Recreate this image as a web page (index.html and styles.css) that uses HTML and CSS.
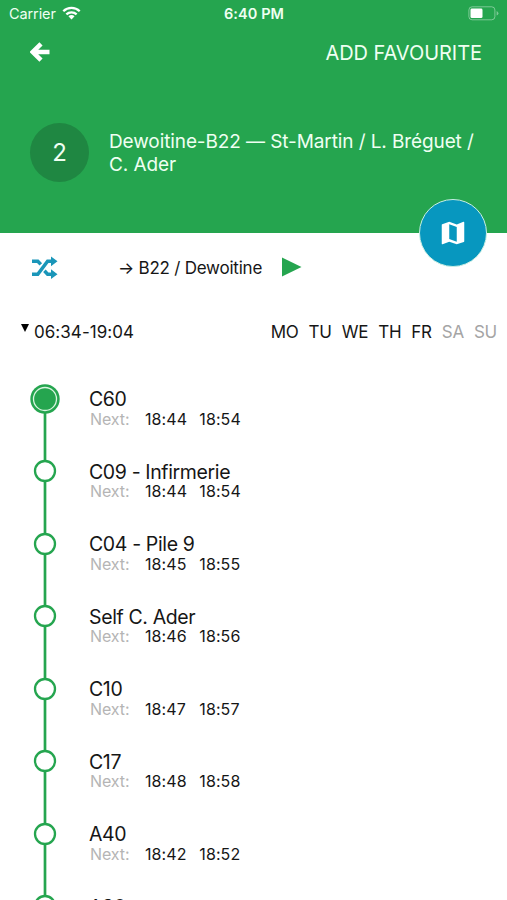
FILE: index.html
```html
<!DOCTYPE html>
<html lang="en">
<head>
<meta charset="utf-8">
<title>Line 2</title>
<link rel="stylesheet" href="styles.css">
</head>
<body>
<header class="header">
  <div class="status">
    <div class="status-left"><span class="carrier">Carrier</span>
      <svg class="wifi" viewBox="0 0 20 15"><g fill="none" stroke="#fff" stroke-width="2.5"><path d="M1.2 5.6a12.6 12.6 0 0 1 17.6 0"/><path d="M4.5 9a8 8 0 0 1 11 0"/></g><path fill="#fff" d="M6.7 11.1a4.8 4.8 0 0 1 6.6 0L10 14.5z"/></svg>
    </div>
    <span class="clock">6:40 PM</span>
    <svg class="battery" viewBox="0 0 31 15"><rect x=".9" y=".8" width="26" height="13" rx="3.2" fill="none" stroke="#fff" stroke-opacity=".4" stroke-width="1"/><rect x="2.5" y="2.5" width="12" height="9.6" rx="1.4" fill="#fff"/><path d="M28.6 5v4.6q1.8-.7 1.8-2.3T28.6 5" fill="#fff" fill-opacity=".4"/></svg>
  </div>
  <nav class="nav">
    <svg class="back" viewBox="0 0 20 20"><path d="M19.5 10H3M11 1.8 2.8 10 11 18.2" fill="none" stroke="#fff" stroke-width="4.5"/></svg>
    <span class="favourite">ADD FAVOURITE</span>
  </nav>
  <div class="line">
    <span class="line-number">2</span>
    <h1 class="line-name">Dewoitine-B22 — St-Martin / L. Bréguet /<br>C. Ader</h1>
  </div>
  <button class="map" aria-label="Map"><svg viewBox="0 0 24 24"><path fill="#fff" d="M20.5 3l-.16.03L15 5.1 9 3 3.36 4.9c-.21.07-.36.25-.36.48V20.5c0 .28.22.5.5.5l.16-.03L9 18.9l6 2.1 5.64-1.9c.21-.07.36-.25.36-.48V3.5c0-.28-.22-.5-.5-.5zM15 19l-6-2.11V5l6 2.11V19z"/></svg></button>
</header>
<section class="direction">
  <svg class="shuffle" viewBox="0 0 26 24"><path d="M0 5.2H5.8L8.8 8.4M12.4 14.8 15.6 18.2H20M0 18.2H5.8L15.6 5.2H20" fill="none" stroke="#1a96b9" stroke-width="3.5"/><path d="M19 .4 25.5 5.2 19 10.2zM19 13.2 25.5 18.2 19 23z" fill="#1a96b9"/></svg>
  <span class="destination">→ B22 / Dewoitine</span>
  <svg class="play" viewBox="0 0 20 20"><path d="M0 .5 19.5 10 0 19.5z" fill="#25a54f"/></svg>
</section>
<section class="schedule">
  <svg class="caret" viewBox="0 0 8 8"><path d="M0 0h8L4 8z"/></svg>
  <span class="hours">06:34-19:04</span>
  <div class="days"><span>MO</span><span>TU</span><span>WE</span><span>TH</span><span>FR</span><span class="off">SA</span><span class="off">SU</span></div>
</section>
<ul class="stops">
  <li class="stop"><svg class="marker" viewBox="0 0 30 72.5"><path class="rail" d="M15 15V73"/><circle cx="15" cy="15" r="14.7" fill="#25a54f"/><circle cx="15" cy="15" r="11.5" fill="none" stroke="#d9f5e0" stroke-width="1.3"/></svg><div><div class="name">C60</div><div class="next"><span class="label">Next:</span><span>18:44</span><span>18:54</span></div></div></li>
  <li class="stop"><svg class="marker" viewBox="0 0 30 72.5"><path class="rail" d="M15 0V73"/><circle class="dot" cx="15" cy="15" r="10"/></svg><div><div class="name">C09 - Infirmerie</div><div class="next"><span class="label">Next:</span><span>18:44</span><span>18:54</span></div></div></li>
  <li class="stop"><svg class="marker" viewBox="0 0 30 72.5"><path class="rail" d="M15 0V73"/><circle class="dot" cx="15" cy="15" r="10"/></svg><div><div class="name">C04 - Pile 9</div><div class="next"><span class="label">Next:</span><span>18:45</span><span>18:55</span></div></div></li>
  <li class="stop"><svg class="marker" viewBox="0 0 30 72.5"><path class="rail" d="M15 0V73"/><circle class="dot" cx="15" cy="15" r="10"/></svg><div><div class="name">Self C. Ader</div><div class="next"><span class="label">Next:</span><span>18:46</span><span>18:56</span></div></div></li>
  <li class="stop"><svg class="marker" viewBox="0 0 30 72.5"><path class="rail" d="M15 0V73"/><circle class="dot" cx="15" cy="15" r="10"/></svg><div><div class="name">C10</div><div class="next"><span class="label">Next:</span><span>18:47</span><span>18:57</span></div></div></li>
  <li class="stop"><svg class="marker" viewBox="0 0 30 72.5"><path class="rail" d="M15 0V73"/><circle class="dot" cx="15" cy="15" r="10"/></svg><div><div class="name">C17</div><div class="next"><span class="label">Next:</span><span>18:48</span><span>18:58</span></div></div></li>
  <li class="stop"><svg class="marker" viewBox="0 0 30 72.5"><path class="rail" d="M15 0V73"/><circle class="dot" cx="15" cy="15" r="10"/></svg><div><div class="name">A40</div><div class="next"><span class="label">Next:</span><span>18:42</span><span>18:52</span></div></div></li>
  <li class="stop"><svg class="marker" viewBox="0 0 30 72.5"><path class="rail" d="M15 0V73"/><circle class="dot" cx="15" cy="15" r="10"/></svg><div><div class="name">A30</div></div></li>
</ul>
</body>
</html>
```
FILE: styles.css
```css
* { box-sizing: border-box; }
html { overflow: hidden; }
body { display: flex; flex-direction: column; margin: 0; height: 900px; overflow: hidden; background: #fff; color: #161616; font-family: Inter, "Liberation Sans", sans-serif; }
svg { display: block; flex: none; }
.header { position: relative; flex: none; height: 233px; background: #25a54f; color: #effff2; }
.status { display: grid; grid-template-columns: 1fr auto 1fr; align-items: center; height: 26px; padding: 0 8px 0 9px; }
.status-left { display: flex; align-items: center; gap: 6px; }
.carrier { font-size: 14.5px; letter-spacing: -0.1px; }
.wifi { width: 19px; height: 14px; }
.clock { font-size: 14.5px; font-weight: 600; letter-spacing: 0.1px; }
.battery { width: 31px; height: 15px; justify-self: end; }
.nav { display: flex; justify-content: space-between; align-items: center; height: 52px; padding: 0 25px 0 30px; }
.back { width: 20px; height: 20px; }
.favourite { margin-top: 1px; font-size: 20px; letter-spacing: -0.05px; }
.line { display: flex; align-items: center; gap: 20px; padding: 45px 0 0 30px; }
.line-number { display: grid; place-items: center; width: 59px; height: 59px; border-radius: 50%; background: #1f8742; font-size: 24px; }
.line-name { margin: 0; font-size: 19px; font-weight: 400; line-height: 23px; letter-spacing: -0.1px; white-space: nowrap; }
.map { position: absolute; left: 419px; top: 198.5px; display: grid; place-items: center; width: 68px; height: 68px; padding: 0; border: 1.5px solid #c9efe4; border-radius: 50%; background: #0797bf; }
.map svg { width: 30px; height: 30px; }
.direction { display: flex; flex: none; align-items: center; height: 69px; padding-left: 32px; }
.shuffle { width: 26px; height: 24px; }
.destination { width: 163.5px; margin-left: 60px; font-size: 17px; letter-spacing: -0.23px; white-space: nowrap; }
.play { width: 20px; height: 20px; margin-top: -1px; }
.schedule { display: flex; flex: none; align-items: center; height: 60px; padding: 0 10px 0 21px; font-size: 17px; }
.caret { width: 8px; height: 8px; margin: -8px 5px 0 0; }
.hours { letter-spacing: 0.05px; }
.days { display: flex; gap: 10px; margin-left: auto; letter-spacing: -0.25px; }
.off { color: #a5a5a5; }
.stops { flex: 1; min-height: 0; overflow: hidden; margin: 21.5px 0 0; padding: 0 0 0 30px; list-style: none; }
.stop { display: flex; gap: 29px; height: 72.5px; }
.marker { width: 30px; height: 72.5px; }
.rail { fill: none; stroke: #25a54f; stroke-width: 2.7; }
.dot { fill: #fff; stroke: #25a54f; stroke-width: 2.3; }
.name { height: 22.5px; margin-top: 4.5px; font-size: 19.5px; line-height: 23px; letter-spacing: -0.37px; }
.next { display: flex; font-size: 16px; line-height: 17px; letter-spacing: 0.1px; }
.next span { width: 54.3px; }
.next .label { width: 56px; padding-left: 1px; color: #b5b5b5; letter-spacing: -0.1px; }
```
